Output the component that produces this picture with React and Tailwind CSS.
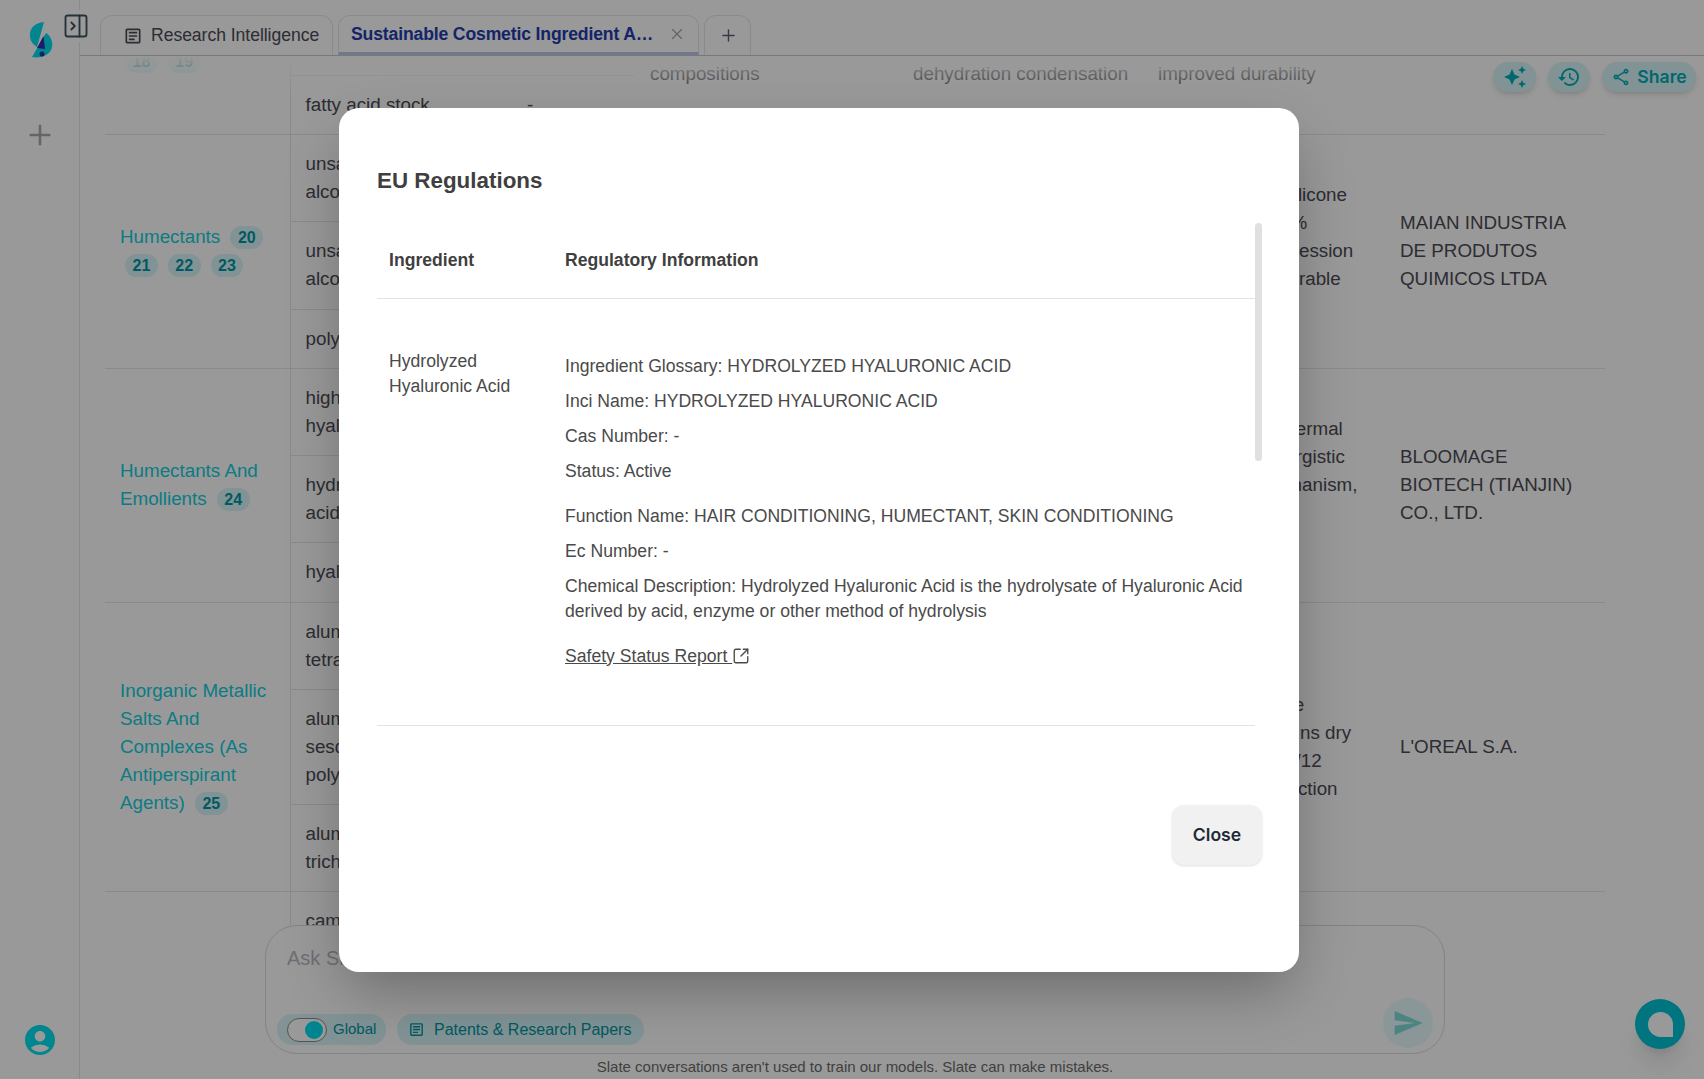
import React from 'react';
import { PanelRightClose, Plus, X, SquareArrowOutUpRight } from 'lucide-react';
import { MdAutoAwesome, MdHistory, MdOutlineShare, MdOutlineArticle, MdAccountCircle, MdSend } from 'react-icons/md';

const Lines = ({ items }) => items.map((t, i) => <div key={i}>{t}</div>);

const Pill = ({ n, first }) => (
  <span className={`inline-block rounded-full bg-[#d8f5f8] px-[7.5px] text-[16px] leading-[23px] font-bold text-[#0095a3] ${first ? 'ml-[5px] mr-[5px]' : 'mx-[5px]'}`}>
    {n}
  </span>
);

const groups = [
  {
    category: <>Emollients And<br />Conditioning Agents<br /><Pill n={18} /><Pill n={19} /></>,
    catClass: 'pb-[41px]',
    rows: [
      { chem: ['fatty acid esters'], h: 'h-[144px]' },
      { chem: ['fatty acid stock'] },
    ],
    use: ['skin care', 'hair care', 'cleansing', 'compositions'],
    process: ['esterification', 'of fatty acids', 'followed by', 'dehydration condensation'],
    benefit: ['higher stability', 'better feel', 'less irritation', 'improved durability'],
    company: ['KAO CORPORATION'],
  },
  {
    category: <>Humectants <Pill n={20} first /><Pill n={21} /><Pill n={22} /><Pill n={23} /></>,
    rows: [
      { chem: ['unsaturated fatty', 'alcohol esters'] },
      { chem: ['unsaturated fatty', 'alcohol ethers'], h: 'h-[88px]' },
      { chem: ['polyglycerol'] },
    ],
    use: ['moisturizing', 'compositions'],
    process: ['enzymatic', 'condensation'],
    benefit: ['with enhanced silicone', 'deposition at 15%', 'higher gene expression', 'enduring, and durable', 'films'],
    company: ['MAIAN INDUSTRIA DE PRODUTOS QUIMICOS LTDA'],
  },
  {
    category: <>Humectants And Emollients <Pill n={24} first /></>,
    rows: [
      { chem: ['high molecular', 'hyaluronic acid'] },
      { chem: ['hydrolyzed hyaluronic', 'acid'] },
      { chem: ['hyaluronic acid'], h: 'h-[60px]' },
    ],
    use: ['anti-aging', 'serums'],
    process: ['microbial', 'fermentation'],
    benefit: ['strengthens its dermal', 'barrier with synergistic', 'a hydrating mechanism,', 'and repair', 'effect'],
    company: ['BLOOMAGE BIOTECH (TIANJIN) CO., LTD.'],
  },
  {
    category: <>Inorganic Metallic Salts And Complexes (As Antiperspirant Agents) <Pill n={25} first /></>,
    rows: [
      { chem: ['aluminum zirconium', 'tetrachlorohydrex'] },
      { chem: ['aluminum', 'sesquichlorohydrate', 'polymer'] },
      { chem: ['aluminum', 'trichlorohydrate'] },
    ],
    use: ['antiperspirant', 'sticks'],
    process: ['controlled', 'hydrolysis'],
    benefit: ['odor-control base', 'so the skin remains dry', 'efficient up to 24/12', 'hour sweat protection'],
    company: ["L'OREAL S.A."],
  },
];

const cell = 'border-b border-[#e5e7eb] px-4 py-[15px] align-middle';

function ResultsTable() {
  return (
    <table className="-mt-[125px] w-[1500px] table-fixed text-[18.8px] leading-[28px] text-[#4b4b55]">
      <colgroup>
        <col className="w-[185px]" />
        <col className="w-[221px]" />
        <col className="w-[123px]" />
        <col className="w-[263px]" />
        <col className="w-[245px]" />
        <col className="w-[242px]" />
        <col className="w-[221px]" />
      </colgroup>
      <tbody>
        {groups.map((g, gi) =>
          g.rows.map((row, ri) => (
            <tr key={`${gi}-${ri}`} className={row.h}>
              {ri === 0 && (
                <td rowSpan={g.rows.length} className={`${cell} !pl-[15px] border-r text-[#10cfdc] ${g.catClass ?? ''}`}>
                  {g.category}
                </td>
              )}
              <td className={`${cell} !pl-[15px]`}><Lines items={row.chem} /></td>
              <td className={cell}>-</td>
              {ri === 0 && (
                <>
                  <td rowSpan={g.rows.length} className={cell}><Lines items={g.use} /></td>
                  <td rowSpan={g.rows.length} className={`${cell} whitespace-nowrap`}><Lines items={g.process} /></td>
                  <td rowSpan={g.rows.length} className={`${cell} whitespace-nowrap`}><Lines items={g.benefit} /></td>
                  <td rowSpan={g.rows.length} className={cell}><Lines items={g.company} /></td>
                </>
              )}
            </tr>
          )),
        )}
        <tr>
          <td className={`${cell} border-r`}></td>
          <td className={`${cell} !pl-[15px]`}>camphor</td>
          <td className={cell}>-</td>
          <td colSpan={4} className={cell}></td>
        </tr>
      </tbody>
    </table>
  );
}

function Logo() {
  return (
    <svg width="24" height="36" viewBox="0 0 24 36">
      <path d="M15 0 C6 1 0 6 1 15 C1.5 20 5 23 8 25 Z" fill="#03dfee" />
      <path d="M17 11 C22 14 24 20 23 25 C22 32 13 37 3 35 Z" fill="#03dfee" />
      <path d="M14.5 14 L8 26 L16 27 Z" fill="#2f2fb0" />
      <circle cx="13" cy="32" r="2.5" fill="#2f2fb0" />
    </svg>
  );
}

function Sidebar() {
  return (
    <aside className="relative flex h-full w-20 shrink-0 flex-col items-center border-r border-[#e5e7eb]">
      <div className="mt-[22px] -ml-[1px] mr-[1px] self-start pl-[30px]">
        <Logo />
      </div>
      <div className="absolute top-[10px] left-[62px] bg-white py-[2px] pr-[2px]">
        <PanelRightClose size={28} strokeWidth={1.6} className="text-[#3f5560]" />
      </div>
      <Plus size={32} strokeWidth={1.9} className="mt-[61px] text-[#a8a8a8]" />
      <MdAccountCircle size={36} className="mt-auto mb-[21px] text-[#00dfee]" />
    </aside>
  );
}

function Tabs() {
  return (
    <div className="flex h-14 shrink-0 items-end gap-[5px] border-b border-[#c8c8c8] pl-5 text-[17.6px]">
      <div className="flex h-10 w-[233px] items-center gap-[8px] rounded-t-xl border border-b-0 border-[#e5e7eb] pl-[22px] text-[#4b4b55]">
        <MdOutlineArticle size={20} className="text-[#4b4b55]" />
        <span className="tracking-[-0.05px]">Research Intelligence</span>
      </div>
      <div className="flex h-10 w-[361px] items-center justify-between rounded-t-xl border border-[#e5e7eb] border-b-[3px] border-b-[#b9c9ee] pl-[12px] pr-[12px]">
        <span className="w-[308px] truncate font-bold tracking-[-0.15px] text-[#233cb0]">Sustainable Cosmetic Ingredient Analysis Report</span>
        <X size={18} strokeWidth={1.5} className="text-[#a3a3a3]" />
      </div>
      <div className="flex h-10 w-[47px] items-center justify-center rounded-t-xl border border-b-0 border-[#e5e7eb] pl-[2px]">
        <Plus size={19} strokeWidth={1.8} className="text-[#5a6372]" />
      </div>
    </div>
  );
}

function ActionButtons() {
  const btn = 'flex h-[30px] items-center justify-center rounded-full bg-[#d8f5f8] text-[#00adb8] shadow-md';
  return (
    <div className="absolute top-[6px] right-2 flex gap-3">
      <div className={`${btn} w-[43px]`}><MdAutoAwesome size={24} /></div>
      <div className={`${btn} w-[42px]`}><MdHistory size={24} /></div>
      <div className={`${btn} w-[94px] gap-[6px] font-['Inter',sans-serif] text-[17.6px] font-semibold`}>
        <MdOutlineShare size={20} />
        Share
      </div>
    </div>
  );
}

function Composer() {
  return (
    <div className="shrink-0">
      <div className="mx-auto flex h-[129px] w-[1180px] flex-col justify-between rounded-[32px] border border-[#dcdcdc] bg-white pt-[18px] pb-[5px] pl-[11px] pr-[11px]">
        <div className="pl-[10px] text-[20px] leading-[28px] text-[#b9b9c4]">Ask Slate anything about your research</div>
        <div className="flex items-end justify-between">
          <div className="mb-[3px] flex gap-[11px]">
            <div className="flex h-[31px] w-[109px] items-center gap-[6px] rounded-full bg-[#d8f5f8] pl-[10px] text-[15px] text-[#0097a3]">
              <span className="flex h-[24px] w-[40px] items-center justify-end rounded-full border border-[#8a8a8a] bg-white pr-[3px]">
                <span className="h-[18px] w-[18px] rounded-full bg-[#03dfee]" />
              </span>
              Global
            </div>
            <div className="flex h-[31px] w-[247px] items-center gap-[9px] rounded-full bg-[#d8f5f8] pl-[11px] text-[16px] text-[#0097a3]">
              <MdOutlineArticle size={17} />
              Patents &amp; Research Papers
            </div>
          </div>
          <div className="flex h-[50px] w-[50px] items-center justify-center rounded-full bg-[#e6fbfc]">
            <MdSend size={32} className="text-[#7fdcd8]" />
          </div>
        </div>
      </div>
      <p className="mt-[3px] h-[22px] text-center text-[15px] leading-[20px] text-[#6b6b6b]">
        Slate conversations aren't used to train our models. Slate can make mistakes.
      </p>
    </div>
  );
}

function RegulationsModal() {
  return (
    <div className="absolute inset-0 flex items-center bg-black/40 pl-[339px]">
      <div className="flex h-[864px] w-[960px] flex-col rounded-[20px] bg-white pt-[58px] pr-[37px] pl-[38px] text-[17.6px] leading-[25px] text-[#4a4a4a] shadow-[0_25px_60px_-8px_rgba(0,0,0,0.3)]">
        <h2 className="text-[22.4px] leading-[30px] font-bold text-[#3f3f3f]">EU Regulations</h2>
        <div className="relative mt-[27px] h-[512px] overflow-hidden pr-[7px]">
          <div className="absolute top-0 right-0 h-[238px] w-[7px] rounded-full bg-[#e0e0e0]" />
          <div className="flex h-[76px] items-center border-b border-[#e3e3e3] pt-[1px] font-bold text-[#3f3f3f]">
            <div className="w-[176px] px-3">Ingredient</div>
            <div className="px-3">Regulatory Information</div>
          </div>
          <div className="flex border-b border-[#e3e3e3] pb-[56px]">
            <div className="w-[176px] px-3 pt-[50px]">Hydrolyzed Hyaluronic Acid</div>
            <div className="flex-1 px-3 pt-[55px]">
              <p className="mb-[10px]">Ingredient Glossary: HYDROLYZED HYALURONIC ACID</p>
              <p className="mb-[10px]">Inci Name: HYDROLYZED HYALURONIC ACID</p>
              <p className="mb-[10px]">Cas Number: -</p>
              <p className="mb-[20px]">Status: Active</p>
              <p className="mb-[10px]">Function Name: HAIR CONDITIONING, HUMECTANT, SKIN CONDITIONING</p>
              <p className="mb-[10px]">Ec Number: -</p>
              <p className="mb-[20px]">Chemical Description: Hydrolyzed Hyaluronic Acid is the hydrolysate of Hyaluronic Acid derived by acid, enzyme or other method of hydrolysis</p>
              <a className="flex items-center">
                <span className="underline whitespace-pre">Safety Status Report </span>
                <SquareArrowOutUpRight size={18} strokeWidth={1.8} />
              </a>
            </div>
          </div>
        </div>
        <div className="mt-[70px] flex justify-end">
          <button className="h-[60px] w-[90px] rounded-xl bg-[#f1f1f1] font-['Inter',sans-serif] text-[17.6px] font-semibold text-[#1f2937] shadow-sm">
            Close
          </button>
        </div>
      </div>
    </div>
  );
}

export default function App() {
  return (
    <div className="relative flex h-[1079px] w-[1704px] overflow-hidden bg-white font-['Liberation_Sans',Arial,sans-serif]">
      <Sidebar />
      <main className="flex min-w-0 flex-1 flex-col">
        <Tabs />
        <div className="relative min-h-0 flex-1 overflow-hidden pl-[25px]">
          <ResultsTable />
          <div className="absolute inset-x-0 top-0 h-[40px] bg-linear-to-b from-white to-transparent" />
          <ActionButtons />
        </div>
        <div className="pl-[25px] pr-[99px]">
          <Composer />
        </div>
      </main>
      <div className="absolute right-[19px] bottom-[30px] flex h-[50px] w-[50px] items-center justify-center rounded-full bg-[#00c3d4] shadow-xl">
        <div className="h-[25px] w-[25px] rounded-[50%_50%_0_50%] bg-white" />
      </div>
      <RegulationsModal />
    </div>
  );
}
